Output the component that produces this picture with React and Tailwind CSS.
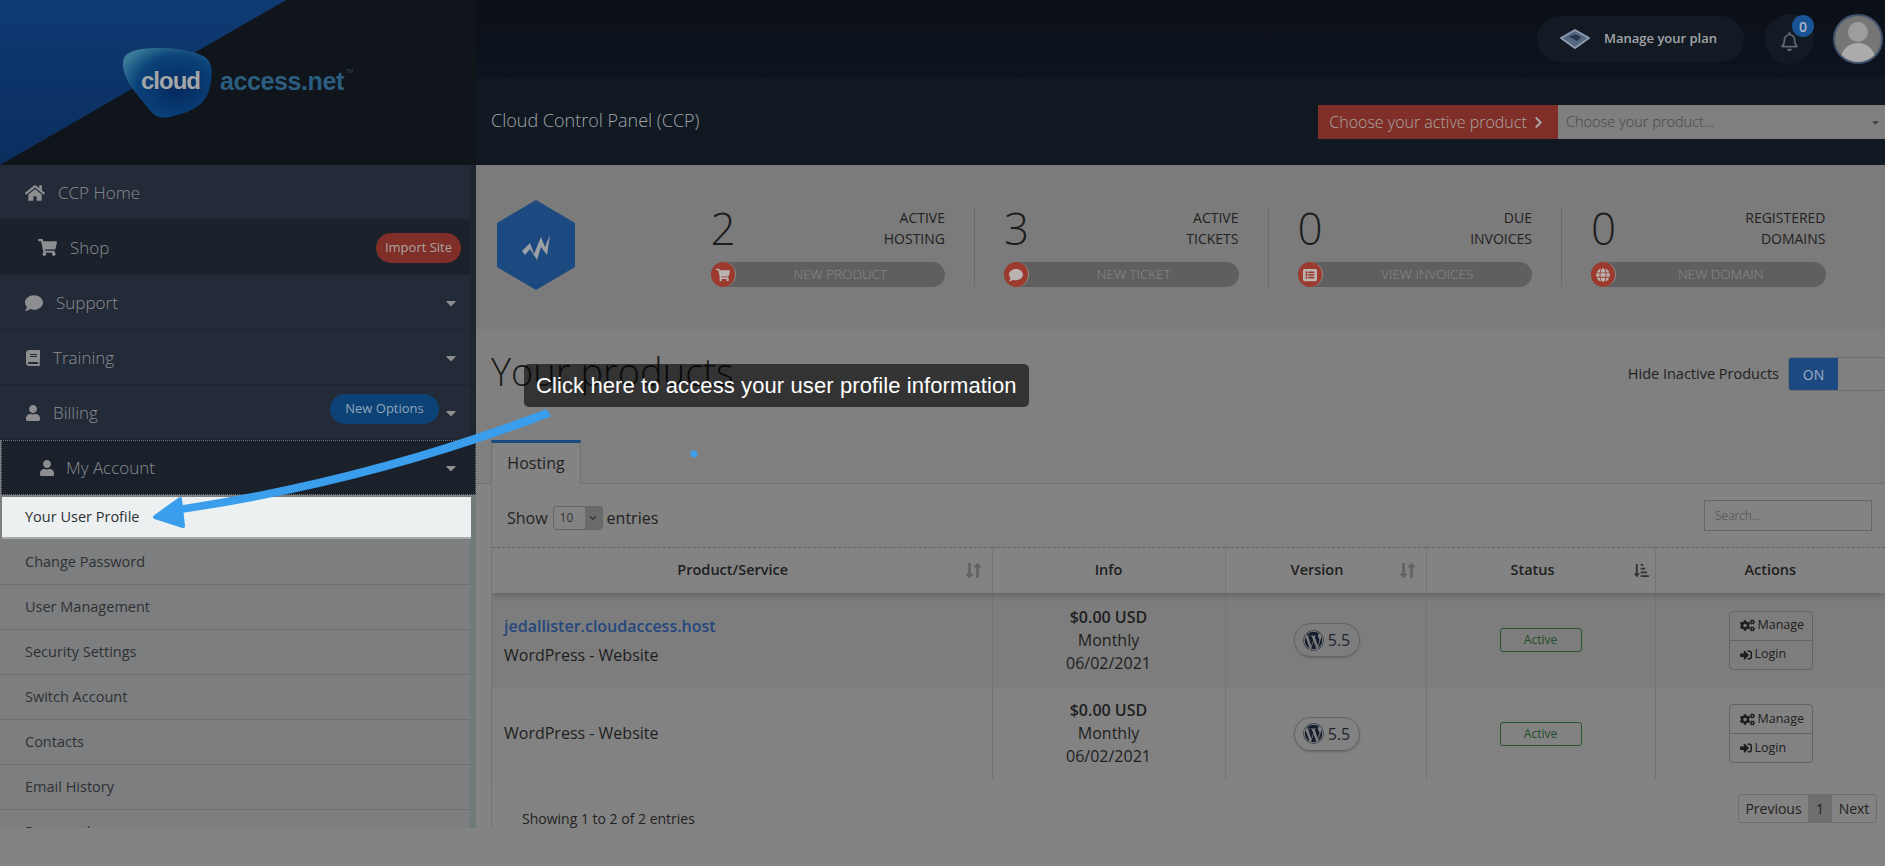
import { FaHome, FaShoppingCart, FaComment, FaBook, FaUser, FaCaretDown, FaChevronRight, FaChevronDown, FaListAlt, FaGlobe, FaWordpress, FaCogs, FaSignInAlt, FaSortAmountDownAlt, FaLongArrowAltDown, FaLongArrowAltUp, FaRegBell } from 'react-icons/fa';

const SUB_ITEMS = ['Change Password', 'User Management', 'Security Settings', 'Switch Account', 'Contacts', 'Email History', 'Password'];

const STATS = [
    { value: '2', top: 'ACTIVE', bottom: 'HOSTING', action: 'NEW PRODUCT', Icon: FaShoppingCart },
    { value: '3', top: 'ACTIVE', bottom: 'TICKETS', action: 'NEW TICKET', Icon: FaComment },
    { value: '0', top: 'DUE', bottom: 'INVOICES', action: 'VIEW INVOICES', Icon: FaListAlt },
    { value: '0', top: 'REGISTERED', bottom: 'DOMAINS', action: 'NEW DOMAIN', Icon: FaGlobe },
];

function NavRow({ icon: Icon, label, iconClass, textClass, caret, badge }) {
    return (
        <div className="flex items-center border-r-[6px] border-r-[#20262f] bg-[#242b38] h-[55px] border-b border-b-[#1e2530] pl-[25px] pr-[11px] pt-[1px]">
            <Icon className={`text-[#8c8e90] ${iconClass}`} />
            <span className={`font-light text-[17px] text-[#8b8e92] ${textClass}`}>{label}</span>
            <div className="ml-auto flex items-center">
                {badge}
                {caret && <FaCaretDown className="text-[#8c8e90] text-[16px] ml-[2px]" />}
            </div>
        </div>
    );
}

function Sidebar() {
    return (
        <aside className="w-[476px] shrink-0 h-full overflow-hidden bg-[#7c7e80]">
            <NavRow icon={FaHome} label="CCP Home" iconClass="text-[20px]" textClass="ml-[13px]" />
            <div className="flex items-center h-[55px] pl-[38px] pr-[9px] bg-[#1b222c] border-r-[6px] border-r-[#20262f]">
                <FaShoppingCart className="text-[#8c8e90] text-[19px]" />
                <span className="font-light text-[17px] text-[#8b8e92] ml-[13px]">Shop</span>
                <span className="ml-auto h-[30px] w-[85px] flex items-center justify-center rounded-full bg-[#7f2f27] text-[13px] text-[#a9a3a1]">Import Site</span>
            </div>
            <NavRow icon={FaComment} label="Support" iconClass="text-[18px]" textClass="ml-[13px]" caret />
            <NavRow icon={FaBook} label="Training" iconClass="text-[16px]" textClass="ml-[12px]" caret />
            <NavRow
                icon={FaUser}
                label="Billing"
                iconClass="text-[16px]"
                textClass="ml-[12px]"
                caret
                badge={<span className="h-[30px] w-[109px] flex items-center justify-center rounded-full bg-[#0d4276] text-[13px] text-[#8fa6bd] -mt-[8px] mr-[2px]">New Options</span>}
            />
            <div className="flex items-center h-[55px] ml-[1px] pl-[37px] pr-[16px] bg-[#1a212b] border border-dotted border-[#70757c]">
                <FaUser className="text-[#8c8e90] text-[16px]" />
                <span className="font-light text-[17px] text-[#8b8e92] ml-[11px]">My Account</span>
                <FaCaretDown className="ml-auto text-[#8c8e90] text-[16px]" />
            </div>
            <div className="border-r-[6px] border-r-[#6f7a7a] bg-[#7c7e80]">
                <div className="h-[42px] ml-[2px] mt-[2px] mb-[1px] -mr-[1px] pl-[23px] flex items-center bg-[#ecf0f1] text-[14.5px] text-[#2c2f33] border-b-2 border-b-[#a6a8a9]">Your User Profile</div>
                {SUB_ITEMS.map((item) => (
                    <div key={item} className="h-[45px] pl-[25px] pt-[11px] border-b border-b-[#6d6f71] text-[14.5px] text-[#2f3133]">{item}</div>
                ))}
            </div>
        </aside>
    );
}

function Header() {
    return (
        <header className="flex h-[165px] shrink-0">
            <div className="relative w-[476px] shrink-0 overflow-hidden bg-[#10151c] flex items-start">
                <div className="absolute left-0 top-0 h-full w-[286px] bg-gradient-to-b from-[#0f3a74] to-[#0b2e5e] [clip-path:polygon(0_0,100%_0,0_100%)]" />
                <div className="relative ml-[123px] mt-[48px] flex items-center">
                    <svg width="90" height="70" viewBox="0 0 90 70">
                        <defs>
                            <radialGradient id="blob" cx="0.62" cy="0.58" r="0.72">
                                <stop offset="0" stopColor="#05285e" />
                                <stop offset="0.65" stopColor="#0a4279" />
                                <stop offset="1" stopColor="#3b7c98" />
                            </radialGradient>
                        </defs>
                        <path d="M8 4C20-2 60-2 80 8C90 13 90 25 87 38C84 54 74 63 47 69C36 71 31 68 25 60C14 46 0 32 0 16C0 9 3 6 8 4Z" fill="url(#blob)" />
                    </svg>
                    <span className="absolute left-[18px] top-[17px] font-['Liberation_Sans',sans-serif] font-bold text-[24px] leading-[32px] tracking-[-1px] text-[#a3a6a8]">cloud</span>
                    <span className="ml-[7px] -mt-[5px] font-['Liberation_Sans',sans-serif] font-bold text-[25px] leading-[32px] tracking-[-0.4px] text-[#2b5d80]">access.net</span>
                    <span className="ml-[2px] -mt-[22px] font-['Liberation_Sans',sans-serif] text-[5px] text-[#3b4a58]">TM</span>
                </div>
            </div>
            <div className="flex-1 min-w-0 flex flex-col">
                <div className="h-[78px] bg-gradient-to-b from-[#0b0f16] to-[#0d1420] flex items-start justify-end pr-[2px]">
                    <div className="mt-[16px] h-[46px] w-[207px] rounded-full bg-[#131a24] flex items-center pl-[23px]">
                        <svg width="30" height="22" viewBox="0 0 30 22">
                            <path d="M15 2L29 10L15 20L1 10Z" fill="#55677f" stroke="#8c9bb0" strokeWidth="2" strokeLinejoin="round" />
                            <path d="M9 9Q15 4 21 9L17 13Q13 10 9 9Z" fill="#26364e" />
                        </svg>
                        <span className="ml-[14px] text-[13px] font-semibold text-[#a3a6a9]">Manage your plan</span>
                    </div>
                    <div className="relative mt-[14px] ml-[21px] h-[50px] w-[49px] rounded-full bg-[#131a24] flex items-center justify-center">
                        <FaRegBell className="text-[#5f6670] text-[19px] mt-[4px]" />
                        <span className="absolute right-0 top-[1px] h-[22px] w-[22px] rounded-full bg-[#1a5394] text-[14px] font-semibold text-[#a9b8c8] flex items-center justify-center">0</span>
                    </div>
                    <div className="mt-[14px] ml-[19px] h-[50px] w-[50px] rounded-full bg-[#767676] border-[2px] border-[#40546e] overflow-hidden flex items-end justify-center">
                        <svg width="46" height="46" viewBox="0 0 46 46">
                            <circle cx="23" cy="16" r="10" fill="#9d9d9d" />
                            <path d="M5 46C6 33 14 27 23 27S40 33 41 46Z" fill="#ababab" />
                        </svg>
                    </div>
                </div>
                <div className="h-[87px] bg-[#101822] flex items-center justify-between pl-[15px] pb-[3px]">
                    <span className="text-[18px] font-light text-[#a3a6a9]">Cloud Control Panel (CCP)</span>
                    <div className="flex h-[34px] w-[567px] mt-[4px]">
                        <div className="w-[240px] bg-[#7f2f27] flex items-center justify-center pr-[2px] text-[16px] font-light text-[#aba5a3]">
                            Choose your active product
                            <FaChevronRight className="text-[13px] ml-[5px]" />
                        </div>
                        <div className="flex-1 bg-[#7f7f7f] flex items-center pl-[8px] pr-[4px] text-[14.5px] font-light text-[#474747]">
                            Choose your product...
                            <FaCaretDown className="ml-auto text-[11px] text-[#404040]" />
                        </div>
                    </div>
                </div>
            </div>
        </header>
    );
}

function Stat({ value, top, bottom, action, Icon }) {
    return (
        <div className="w-[234.5px]">
            <div className="flex justify-between h-[55px]">
                <span className="text-[44px] font-light leading-[44px] text-[#1d1d1d] -mt-[1px]">{value}</span>
                <div className="text-right text-[14px] leading-[21px] text-[#222]">
                    <div>{top}</div>
                    <div>{bottom}</div>
                </div>
            </div>
            <div className="relative h-[25px] rounded-full bg-[#5f5f5f] flex items-center justify-center pl-[25px] text-[13.5px] font-light text-[#8c8c8c]">
                <span className="absolute left-0 top-0 h-[25px] w-[25px] rounded-full bg-[#9c3a2d] border-r border-[#8e8e8e] flex items-center justify-center text-[#b9b3b1] text-[14px]">
                    <Icon />
                </span>
                {action}
            </div>
        </div>
    );
}

function StatsBand() {
    return (
        <section className="h-[164px] bg-[#7b7b7b] flex items-start pt-[35px] pl-[21px]">
            <svg className="shrink-0" width="78" height="90" viewBox="0 0 78 90">
                <path d="M39 0L78 23V67L39 90L0 67V23Z" fill="#1c4a80" />
                <path d="M25 51L33 43L37 54L44 37L48 47L53 35L50 55L44 47L40 60L33 49L28 55Z" fill="#9c9fa3" />
            </svg>
            <div className="flex ml-[135.5px] pt-[7px]">
                {STATS.map((s, i) => (
                    <div key={s.action} className="flex">
                        {i > 0 && <div className="w-px h-[80px] bg-[#6b6b6b] mx-[29px]" />}
                        <Stat {...s} />
                    </div>
                ))}
            </div>
        </section>
    );
}

function SortIcon() {
    return (
        <span className="absolute right-[6px] top-[14px] flex text-[#636363] text-[17px]">
            <FaLongArrowAltDown className="-mr-[9px]" />
            <FaLongArrowAltUp />
        </span>
    );
}

function ProductRow({ host, height }) {
    return (
        <tr className={`${height} ${host ? 'bg-[#7d7d7d]' : 'bg-[#828282]'}`}>
            <td className="pl-[12px] border-r border-[#757575] text-[16px] text-[#1e1e1e]">
                {host && <div className="font-semibold text-[#24477f] text-[16px] leading-[22px] mb-[7px]">jedallister.cloudaccess.host</div>}
                <div className={`leading-[22px] ${host ? '' : '-mt-[2px]'}`}>WordPress - Website</div>
            </td>
            <td className="text-center border-r border-[#757575] text-[16px] leading-[23px] text-[#1e1e1e]">
                <div className="font-semibold">$0.00 USD</div>
                <div>Monthly</div>
                <div>06/02/2021</div>
            </td>
            <td className="border-r border-[#757575]">
                <span className="ml-[68px] h-[34px] w-[66px] rounded-full border border-[#636363] shadow-[0_1px_2px_#666] flex items-center justify-center text-[16px] text-[#1e2530]">
                    <FaWordpress className="text-[#141d2e] text-[21px] mr-[4px]" />5.5
                </span>
            </td>
            <td className="border-r border-[#757575]">
                <span className="ml-[73px] h-[24px] w-[82px] rounded-[3px] border border-[#29562e] flex items-center justify-center text-[12px] text-[#234d28]">Active</span>
            </td>
            <td>
                <div className="ml-[73px] w-[84px] rounded-[4px] border border-[#646464] text-[12.5px] text-[#1e1e1e]">
                    <div className="h-[29px] flex items-center pl-[10px] border-b border-[#646464]"><FaCogs className="text-[15px] mr-[3px]" />Manage</div>
                    <div className="h-[28px] flex items-center pl-[10px]"><FaSignInAlt className="text-[12px] mr-[3px]" />Login</div>
                </div>
            </td>
        </tr>
    );
}

function ProductsTable() {
    return (
        <table className="w-[1393px] table-fixed border-collapse">
            <colgroup>
                <col className="w-[500px]" />
                <col className="w-[233px]" />
                <col className="w-[201px]" />
                <col className="w-[229px]" />
                <col className="w-[230px]" />
            </colgroup>
            <thead>
                <tr className="h-[45px] text-[14.5px] font-semibold text-[#1e1e1e] shadow-[0_3px_6px_#666] relative border-t border-dashed border-t-[#666]">
                    <th className="relative font-semibold pr-[18px] border-r border-[#757575]">Product/Service<SortIcon /></th>
                    <th className="font-semibold border-r border-[#757575]">Info</th>
                    <th className="relative font-semibold pr-[17px] border-r border-[#757575]">Version<SortIcon /></th>
                    <th className="relative font-semibold pr-[16px] border-r border-[#757575]">
                        Status
                        <FaSortAmountDownAlt className="absolute right-[6px] top-[15px] text-[15px] text-[#333]" />
                    </th>
                    <th className="font-semibold">Actions</th>
                </tr>
            </thead>
            <tbody>
                <ProductRow host height="h-[95px]" />
                <ProductRow height="h-[92px]" />
            </tbody>
        </table>
    );
}

function ProductsPanel() {
    return (
        <section className="pl-[15px] bg-[#838383]">
            <div className="h-[60px] flex items-end bg-[#7f7f7f] -ml-[15px] pl-[15px] border-b border-[#727272]">
                <div className="h-[44px] w-[90px] -mb-px border-t-[3px] border-t-[#1c4a80] border-r border-r-[#727272] border-l border-l-[#727272] bg-[#838383] flex items-center justify-center pb-[2px] text-[16px] text-[#222]">Hosting</div>
            </div>
            <div className="border-l border-[#757575] h-[344px] overflow-hidden">
                <div className="h-[63px] flex items-start pl-[15px] text-[16px] text-[#222]">
                    <div className="flex items-center mt-[22px]">
                        Show
                        <span className="ml-[5px] mr-[4px] h-[24px] w-[50px] rounded-[3px] border border-[#666] flex items-center justify-between text-[12px] text-[#333] pl-[6px] overflow-hidden">
                            10
                            <span className="h-full w-[17px] bg-[#6a6a6a] flex items-center justify-center text-[8px]"><FaChevronDown /></span>
                        </span>
                        entries
                    </div>
                    <div className="ml-auto mt-[16px] mr-[13px] h-[31px] w-[168px] border border-[#666] pl-[10px] flex items-center text-[12px] font-light text-[#4a4a4a]">Search...</div>
                </div>
                <ProductsTable />
                <div className="flex items-start justify-between pl-[30px] pr-[8px] pt-[14px] text-[14px] text-[#222]">
                    <span className="mt-[14px]">Showing 1 to 2 of 2 entries</span>
                    <div className="flex h-[29px] rounded-[3px] border border-[#6e6e6e]">
                        <span className="w-[69px] flex items-center justify-center">Previous</span>
                        <span className="w-[24px] flex items-center justify-center bg-[#6e6e6e]">1</span>
                        <span className="w-[44px] flex items-center justify-center">Next</span>
                    </div>
                </div>
            </div>
        </section>
    );
}

export default function App() {
    return (
        <div className="relative w-[1885px] h-[866px] overflow-hidden bg-[#838383] flex flex-col font-['Open_Sans',sans-serif]">
            <Header />
            <div className="flex h-[663px] shrink-0">
                <Sidebar />
                <main className="flex-1 min-w-0 overflow-hidden">
                    <StatsBand />
                    <div className="h-[95px] bg-[#808080] flex items-center justify-between pl-[15px]">
                        <h1 className="text-[38px] font-light text-[#1a1a1a] -mt-[10px]">Your products</h1>
                        <div className="flex items-center -mt-[5px]">
                            <span className="text-[14.5px] text-[#222] mr-[9px]">Hide Inactive Products</span>
                            <div className="flex h-[34px] w-[100px] -mr-[3px] rounded-[3px] border border-[#6e6e6e] overflow-hidden">
                                <span className="w-[49px] bg-[#1c4a80] flex items-center justify-center text-[14px] text-[#9fb0c4]">ON</span>
                            </div>
                        </div>
                    </div>
                    <ProductsPanel />
                </main>
            </div>

            {/* overlays: tour tooltip + arrow */}
            <div className="absolute left-[524px] top-[364px] h-[43px] w-[505px] rounded-[5px] bg-black/60 flex items-center pl-[12px] font-['Liberation_Sans',sans-serif] text-[22px] tracking-[0.1px] text-white">
                Click here to access your user profile information
            </div>
            <svg className="absolute left-0 top-0 pointer-events-none" width="1885" height="866" viewBox="0 0 1885 866">
                <path d="M546 410Q370 477 182 506L183 512Q372 484 550 416Z" fill="#3a9eed" stroke="#3a9eed" strokeWidth="1.5" strokeLinejoin="round" />
                <path d="M155 517L180 499L183 526Z" fill="#3a9eed" stroke="#3a9eed" strokeWidth="4" strokeLinejoin="round" />
                <circle cx="694" cy="454" r="3.5" fill="#3a9eed" />
            </svg>
        </div>
    );
}
